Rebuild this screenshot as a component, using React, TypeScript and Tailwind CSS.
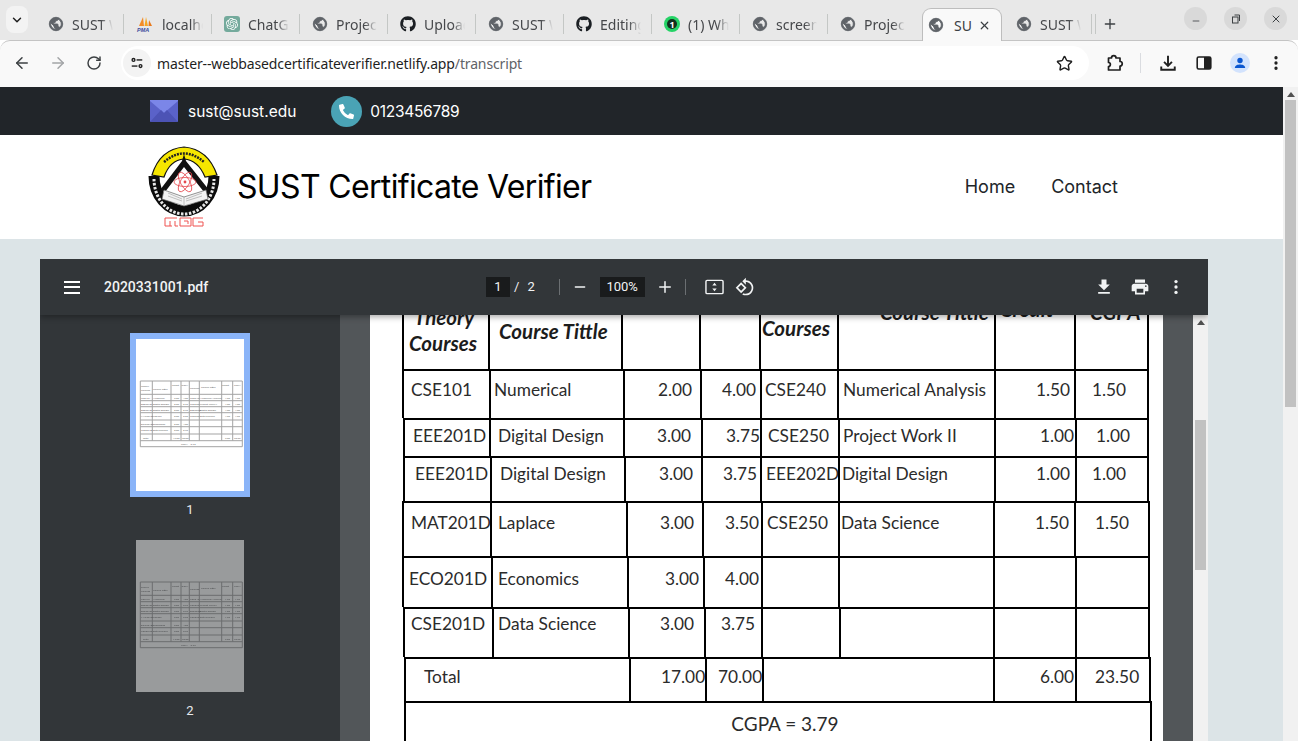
import { ArrowLeft, ArrowRight, ChevronDown, Minus, MoreVertical, Plus, RotateCw, Star, X } from "lucide-react"
import { FaGithub, FaPhoneAlt } from "react-icons/fa"
import { SiOpenai } from "react-icons/si"

function Globe() {
    return (
        <svg viewBox="0 0 24 24" className="h-4 w-4 shrink-0" fill="#5f6368" stroke="#5f6368" strokeWidth="1.4">
            <path d="M12 2C6.48 2 2 6.48 2 12s4.48 10 10 10 10-4.48 10-10S17.52 2 12 2zm-1 17.93c-3.95-.49-7-3.85-7-7.93 0-.62.08-1.21.21-1.79L9 15v1c0 1.1.9 2 2 2v1.93zm6.9-2.54c-.26-.81-1-1.39-1.9-1.39h-1v-3c0-.55-.45-1-1-1H8v-2h2c.55 0 1-.45 1-1V7h2c1.1 0 2-.9 2-2v-.41c2.93 1.19 5 4.06 5 7.41 0 2.08-.8 3.97-2.1 5.39z" />
        </svg>
    )
}

function PmaIcon() {
    return (
        <svg viewBox="0 0 18 16" className="h-4 w-[18px] shrink-0">
            <path d="M3 10 L7 1 L8 10 Z" fill="#f28c28" />
            <path d="M8.5 10 L10 1 L12 10 Z" fill="#f5a623" />
            <path d="M12.5 10 L13 4 L16 10 Z" fill="#e8791c" />
            <text x="1" y="15.5" fontSize="5.5" fontWeight="700" fontStyle="italic" fill="#3b4a9c" fontFamily="Liberation Sans, sans-serif">PMA</text>
        </svg>
    )
}

function GptIcon() {
    return (
        <div className="flex h-4 w-4 shrink-0 items-center justify-center rounded-[3px] bg-[#74aa9c] text-white">
            <SiOpenai className="h-3 w-3" />
        </div>
    )
}

function WhatsappIcon() {
    return (
        <div className="flex h-4 w-4 shrink-0 items-center justify-center rounded-full bg-[#25d366]">
            <div className="flex h-[10px] w-[10px] items-center justify-center rounded-full bg-[#12301f] text-[9px] leading-none font-bold text-white">1</div>
        </div>
    )
}

const tabs = [
    { label: "SUST Web", icon: <Globe /> },
    { label: "localhost", icon: <PmaIcon /> },
    { label: "ChatGPT", icon: <GptIcon /> },
    { label: "Project", icon: <Globe /> },
    { label: "Upload", icon: <FaGithub className="h-4 w-4 shrink-0 text-[#1b1f23]" /> },
    { label: "SUST Web", icon: <Globe /> },
    { label: "Editing", icon: <FaGithub className="h-4 w-4 shrink-0 text-[#1b1f23]" /> },
    { label: "(1) Whats", icon: <WhatsappIcon /> },
    { label: "screen", icon: <Globe /> },
    { label: "Project", icon: <Globe /> },
]

function Tab({ label, icon, last }: { label: string; icon: React.ReactNode; last?: boolean }) {
    return (
        <div className="flex h-8 w-[88px] shrink-0 items-center pl-3">
            {icon}
            <span className="ml-2 w-[41px] overflow-hidden text-[14px] whitespace-nowrap text-[#45474a] [mask-image:linear-gradient(to_right,black_70%,transparent)]">
                {label}
            </span>
            {!last && <span className="ml-auto h-5 w-px bg-[#c4c7c5]" />}
        </div>
    )
}

function TabStrip() {
    return (
        <div className="flex h-10 shrink-0 bg-[#e8e8e8] pt-2 font-['Noto_Sans',sans-serif]">
            <div className="mt-[-2px] ml-[6px] flex h-[27px] w-[22px] items-center justify-center rounded-lg bg-[#f3f3f3] text-[#1f1f1f]">
                <ChevronDown size={14} strokeWidth={2.5} />
            </div>
            <div className="ml-2 flex">
                {tabs.map((tab, i) => (
                    <Tab key={i} {...tab} last={i === 9} />
                ))}
                <div className="z-10 ml-[6px] flex h-[33px] w-[80px] shrink-0 items-center rounded-t-[9px] border border-b-0 border-[#bdbdbd] bg-[#f9f9f9] pl-[5px]">
                    <Globe />
                    <span className="ml-[10px] text-[14px] text-[#3c4043]">SU</span>
                    <X size={13} strokeWidth={2.2} className="mr-[10px] ml-auto text-[#3c4043]" />
                </div>
                <div className="ml-[2px] flex">
                    <Tab label="SUST Web" icon={<Globe />} />
                    <span className="mt-[6px] ml-[3px] h-5 w-px bg-[#c4c7c5]" />
                </div>
                <Plus size={16} strokeWidth={2} className="mt-2 ml-[6px] text-[#3c4043]" />
            </div>
            <div className="mt-[-1px] ml-auto flex gap-[17px] pr-[11px]">
                <div className="flex h-[23px] w-[23px] items-center justify-center rounded-full bg-[#d9d9d9] text-[#3c4043]">
                    <Minus size={10} strokeWidth={2} className="mt-1" />
                </div>
                <div className="flex h-[23px] w-[23px] items-center justify-center rounded-full bg-[#d9d9d9]">
                    <svg viewBox="0 0 10 10" className="h-[10px] w-[10px]" fill="none" stroke="#3c4043" strokeWidth="1">
                        <rect x="1.5" y="3" width="5.5" height="6" />
                        <path d="M3.5 1 H8.5 V7" />
                    </svg>
                </div>
                <div className="flex h-[23px] w-[23px] items-center justify-center rounded-full bg-[#d9d9d9] text-[#3c4043]">
                    <X size={12} strokeWidth={2} />
                </div>
            </div>
        </div>
    )
}

function AddressBar() {
    return (
        <div className="flex h-[47px] shrink-0 items-center rounded-t-[10px] border-t border-[#c4c4c4] bg-[#f9f9f9] pb-[2px] pl-[13px] font-['Noto_Sans',sans-serif] text-[#3c4043]">
            <ArrowLeft size={18} strokeWidth={2} />
            <ArrowRight size={18} strokeWidth={2} className="ml-[18px] text-[#a3a5a7]" />
            <RotateCw size={16} strokeWidth={2.2} className="ml-[19px]" />
            <div className="ml-[19px] flex h-[34px] w-[968px] items-center rounded-full bg-white">
                <div className="ml-[2px] flex h-7 w-7 items-center justify-center rounded-full bg-[#f3f3f3]">
                    <svg viewBox="0 0 16 16" className="h-[14px] w-[14px]" fill="none" stroke="#1f1f1f" strokeWidth="1.6">
                        <circle cx="4" cy="4.5" r="1.6" />
                        <path d="M7.5 4.5 H14" />
                        <circle cx="12" cy="11.5" r="1.6" />
                        <path d="M2 11.5 H8.5" />
                    </svg>
                </div>
                <span className="ml-[6px] text-[14px] tracking-[-0.14px] text-[#1f1f1f]">
                    master--webbasedcertificateverifier.netlify.app<span className="text-[#5f6368]">/transcript</span>
                </span>
                <Star size={17} strokeWidth={2} className="mr-[16px] ml-auto text-[#1f1f1f]" />
            </div>
            <svg viewBox="0 0 18 18" className="ml-[17px] h-[18px] w-[18px]" fill="none" stroke="#1f1f1f" strokeWidth="1.7" strokeLinejoin="round">
                <path d="M2.5 4 H5.5 C5.5 0.8 10 0.8 10 4 H14 V7.5 C17 7.5 17 12 14 12 V16 H2.5 V12.5 C5 12.5 5 8.5 2.5 8.5 Z" />
            </svg>
            <span className="ml-[16px] h-5 w-px bg-[#dadce0]" />
            <svg viewBox="0 0 16 16" className="ml-[18px] h-[18px] w-[18px]" fill="none" stroke="#1f1f1f" strokeWidth="1.7">
                <path d="M8 1.5 V10 M4.5 7 L8 10.5 L11.5 7 M2 11 V14 H14 V11" />
            </svg>
            <svg viewBox="0 0 16 16" className="ml-[19px] h-4 w-4">
                <rect x="1.2" y="2" width="13.6" height="12" rx="1.5" fill="none" stroke="#1f1f1f" strokeWidth="1.6" />
                <rect x="8" y="2" width="7" height="12" fill="#1f1f1f" />
            </svg>
            <div className="ml-[18px] flex h-5 w-5 items-center justify-center rounded-full bg-[#d3e3fd]">
                <svg viewBox="0 0 16 16" className="h-4 w-4" fill="#0b57d0">
                    <circle cx="8" cy="5.5" r="2.7" />
                    <path d="M2.8 13 C3 10 5.5 9.4 8 9.4 C10.5 9.4 13 10 13.2 13 Z" />
                </svg>
            </div>
            <MoreVertical size={18} strokeWidth={2.4} className="ml-[17px] text-[#1f1f1f]" />
        </div>
    )
}

function Logo() {
    return (
        <svg viewBox="0 0 72 82" className="h-[82px] w-[72px] shrink-0">
            <path d="M6 30 A30 35 0 0 0 66 30" fill="none" stroke="#0b0b0b" strokeWidth="11" />
            <path d="M6 33 A30 35 0 0 0 66 33" fill="none" stroke="#e8e8e8" strokeWidth="3" strokeDasharray="2.5 1.5" />
            <path d="M4 29 Q 12 3 36 1 Q 60 3 69 29 L 57 31 Q 50 14 36 13 Q 22 14 16 31 Z" fill="#f6e600" stroke="#111" strokeWidth="1.2" />
            <path d="M16 16 Q 36 -1 56 16" fill="none" stroke="#222" strokeWidth="2.5" strokeDasharray="2 1" />
            <path d="M36 8 L38 15 L61 44 L56 46 L36 21 L17 46 L12 44 L34 15 Z" fill="#111" />
            <g fill="none" stroke="#e5484d" strokeWidth="0.8">
                <ellipse cx="37" cy="36" rx="11" ry="4.5" />
                <ellipse cx="37" cy="36" rx="11" ry="4.5" transform="rotate(60 37 36)" />
                <ellipse cx="37" cy="36" rx="11" ry="4.5" transform="rotate(120 37 36)" />
            </g>
            <circle cx="37" cy="36" r="1.4" fill="#e5484d" />
            <path d="M16 44 L36 51 L58 44 L60 53 L36 60 L14 53 Z" fill="#f2f2f2" stroke="#666" strokeWidth="0.7" />
            <path d="M36 51 V60 M20 47 L34 53 M20 50 L34 55 M54 47 L38 53 M54 50 L38 55" stroke="#888" strokeWidth="0.5" fill="none" />
            <g fill="none" stroke="#ef5350" strokeWidth="1">
                <path d="M17 72 H29 M17 72 V80 M17 80 H24 M22 75 V80 M27 75 V80 H30" />
                <path d="M32 72 H43 V80 H32 Z M36 75 H40 V78" />
                <path d="M45 72 H55 M45 72 V80 H55 V76 H50" />
            </g>
        </svg>
    )
}

function TopBar() {
    return (
        <div className="flex h-[48px] shrink-0 items-center bg-[#212529] pl-[150px] font-['Inter',sans-serif] text-[15.5px] text-white">
            <svg viewBox="0 0 28 22" className="h-[22px] w-7">
                <rect width="28" height="22" rx="1" fill="#5a62c9" />
                <path d="M0 1 L14 13 L28 1 V0 H0 Z" fill="#7b86e8" />
                <path d="M0 22 L11 10 L14 13 L17 10 L28 22 Z" fill="#4c53b5" />
            </svg>
            <span className="ml-[10px] pt-[2px]">sust@sust.edu</span>
            <div className="ml-[35px] flex h-[31px] w-[31px] items-center justify-center rounded-full bg-[#4aa3b5] text-white">
                <FaPhoneAlt size={15} className="scale-x-[-1] rotate-90" />
            </div>
            <span className="ml-[8px] pt-[2px] tracking-[-0.3px]">0123456789</span>
        </div>
    )
}

function SiteHeader() {
    return (
        <div className="flex h-[104px] shrink-0 items-center bg-white pr-[165px] pl-[148px] font-['Inter',sans-serif] text-black">
            <Logo />
            <span className="ml-[17px] text-[32px] font-normal tracking-[-0.66px]">SUST Certificate Verifier</span>
            <nav className="ml-auto flex gap-9 pb-[2px] text-[18px] text-[#212529]">
                <a>Home</a>
                <a>Contact</a>
            </nav>
        </div>
    )
}

const thumbRows = [42, 55.3, 61.7, 67.7, 73.7, 81, 87.7, 95, 101.7, 107.7]
const thumbCols = [4.3, 16.3, 35, 45, 53.3, 63.3, 85.7, 96.7, 106.3]
const thumbText: [number, number, string][] = [
    [5, 48, "Theory"], [5, 52, "Courses"], [17, 51, "Course Tittle"], [36, 47, "Credit"], [45.5, 47, "CGPA"], [54, 50, "Courses"], [65, 49, "Course Tittle"], [86, 47, "Credit"], [98, 47, "CGPA"],
    [5, 59.5, "CSE101"], [17, 59.5, "Numerical"], [38, 59.5, "2.00"], [47, 59.5, "4.00"], [54, 59.5, "CSE240"], [64, 59.5, "Numerical Analysis"], [89, 59.5, "1.50"], [99, 59.5, "1.50"],
    [5, 65.5, "EEE201D"], [17, 65.5, "Digital Design"], [38, 65.5, "3.00"], [47, 65.5, "3.75"], [54, 65.5, "CSE250"], [64, 65.5, "Project Work II"], [89, 65.5, "1.00"], [99, 65.5, "1.00"],
    [5, 71.5, "EEE201D"], [17, 71.5, "Digital Design"], [38, 71.5, "3.00"], [47, 71.5, "3.75"], [54, 71.5, "EEE202D"], [64, 71.5, "Digital Design"], [89, 71.5, "1.00"], [99, 71.5, "1.00"],
    [5, 78, "MAT201D"], [17, 78, "Laplace"], [38, 78, "3.00"], [47, 78, "3.50"], [54, 78, "CSE250"], [64, 78, "Data Science"], [89, 78, "1.50"], [99, 78, "1.50"],
    [5, 85.5, "ECO201D"], [17, 85.5, "Economics"], [38, 85.5, "3.00"], [47, 85.5, "4.00"],
    [5, 92, "CSE201D"], [17, 92, "Data Science"], [38, 92, "3.00"], [47, 92, "3.75"],
    [7, 99.5, "Total"], [37, 99.5, "17.00"], [46, 99.5, "70.00"], [89, 99.5, "6.00"], [98, 99.5, "23.50"],
    [45, 106, "CGPA = 3.79"],
]

function ThumbPage() {
    return (
        <svg viewBox="0 0 108 152" className="block h-[152px] w-[108px] bg-white">
            <g stroke="#a3a3a3" strokeWidth="1">
                {thumbRows.map(y => <line key={y} x1="4.3" x2="106.3" y1={y} y2={y} />)}
                {thumbCols.map((x, i) => (
                    <line key={x} x1={x} x2={x} y1="42" y2={i === 0 || i === 8 ? 107.7 : 101.7} />
                ))}
            </g>
            <g fontSize="2.6" fill="#666" fontFamily="Lato, sans-serif">
                {thumbText.map(([x, y, text]) => <text key={`${x}-${y}`} x={x} y={y}>{text}</text>)}
            </g>
        </svg>
    )
}

function Sidebar() {
    return (
        <div className="flex w-[300px] shrink-0 flex-col items-center bg-[#323639] pt-[18px] font-['Roboto',sans-serif] text-[13px] text-[#e8eaed]">
            <div className="border-[6px] border-[#8ab4f8]">
                <ThumbPage />
            </div>
            <div className="h-[37px] leading-[26px]">1</div>
            <div className="border-[6px] border-transparent">
                <div className="opacity-50">
                    <ThumbPage />
                </div>
            </div>
            <div className="h-[37px] leading-[26px]">2</div>
        </div>
    )
}

const docRows = [
    {
        box: "ml-[33px] h-[54px] grid-cols-[86px_133px_78px_60px_78px_157px_80px_75px] text-[20.5px] font-bold italic text-[#1c1c1c]",
        cells: [
            { text: "Theory", sub: "Courses", cls: "-mt-[10px] pl-[9px]" },
            { text: "Course Tittle", cls: "pt-1 pl-2" },
            { text: "", cls: "" },
            { text: "", cls: "" },
            { text: "Courses", cls: "pt-px pl-0" },
            { text: "Course Tittle", cls: "-mt-[15px] pl-[40px]" },
            { text: "Credit", cls: "-mt-[18px] pl-[3px]" },
            { text: "CGPA", cls: "-mt-[15px] pl-[13px]" },
        ],
    },
    {
        box: "ml-[33px] h-[49px] border-t-2 grid-cols-[87px_134px_77px_60px_77px_157px_80px_75px]",
        pad: "pt-[7px]",
        cells: [
            { text: "CSE101", cls: "pl-[6px]" },
            { text: "Numerical", cls: "pl-[2px]" },
            { text: "2.00", cls: "pl-[32px]" },
            { text: "4.00", cls: "pl-[19px]" },
            { text: "CSE240", cls: "pl-[2px]" },
            { text: "Numerical Analysis", cls: "pl-[3px]" },
            { text: "1.50", cls: "pl-[39px]" },
            { text: "1.50", cls: "pl-[15px]" },
        ],
    },
    {
        box: "ml-[34px] h-[38px] border-t-2 grid-cols-[86px_134px_78px_59px_78px_156px_81px_74px]",
        pad: "pt-[4px]",
        cells: [
            { text: "EEE201D", cls: "pl-[7px]" },
            { text: "Digital Design", cls: "pl-[6px]" },
            { text: "3.00", cls: "pl-[31px]" },
            { text: "3.75", cls: "pl-[22px]" },
            { text: "CSE250", cls: "pl-[5px]" },
            { text: "Project Work II", cls: "pl-[2px]" },
            { text: "1.00", cls: "pl-[43px]" },
            { text: "1.00", cls: "pl-[18px]" },
        ],
    },
    {
        box: "ml-[34px] h-[45px] border-t-2 grid-cols-[87px_134px_77px_59px_78px_156px_81px_74px]",
        pad: "pt-[4px]",
        cells: [
            { text: "EEE201D", cls: "pl-[9px]" },
            { text: "Digital Design", cls: "pl-[7px]" },
            { text: "3.00", cls: "pl-[32px]" },
            { text: "3.75", cls: "pl-[19px]" },
            { text: "EEE202D", cls: "pl-[3px]" },
            { text: "Digital Design", cls: "pl-[1px]" },
            { text: "1.00", cls: "pl-[39px]" },
            { text: "1.00", cls: "pl-[14px]" },
        ],
    },
    {
        box: "ml-[33px] h-[55px] border-t-2 grid-cols-[88px_136px_76px_59px_77px_155px_81px_76px]",
        pad: "pt-[8px]",
        cells: [
            { text: "MAT201D", cls: "pl-[6px]" },
            { text: "Laplace", cls: "pl-[5px]" },
            { text: "3.00", cls: "pl-[31px]" },
            { text: "3.50", cls: "pl-[20px]" },
            { text: "CSE250", cls: "pl-[3px]" },
            { text: "Data Science", cls: "pl-0" },
            { text: "1.50", cls: "pl-[39px]" },
            { text: "1.50", cls: "pl-[18px]" },
        ],
    },
    {
        box: "ml-[33px] h-[51px] border-t-2 grid-cols-[89px_136px_76px_58px_77px_155px_82px_75px]",
        pad: "pt-[9px]",
        cells: [
            { text: "ECO201D", cls: "pl-[4px]" },
            { text: "Economics", cls: "pl-[4px]" },
            { text: "3.00", cls: "pl-[35px]" },
            { text: "4.00", cls: "pl-[19px]" },
            { text: "", cls: "" },
            { text: "", cls: "" },
            { text: "", cls: "" },
            { text: "", cls: "" },
        ],
    },
    {
        box: "ml-[34px] h-[50px] border-t-2 grid-cols-[89px_136px_76px_57px_78px_154px_82px_75px]",
        pad: "pt-[3px]",
        cells: [
            { text: "CSE201D", cls: "pl-[5px]" },
            { text: "Data Science", cls: "pl-[3px]" },
            { text: "3.00", cls: "pl-[29px]" },
            { text: "3.75", cls: "pl-[14px]" },
            { text: "", cls: "" },
            { text: "", cls: "" },
            { text: "", cls: "" },
            { text: "", cls: "" },
        ],
    },
    {
        box: "ml-[35px] h-[44px] border-t-2 grid-cols-[225px_76px_57px_231px_82px_76px]",
        pad: "pt-[6px]",
        cells: [
            { text: "Total", cls: "pl-[17px]" },
            { text: "17.00", cls: "pl-[29px]" },
            { text: "70.00", cls: "pl-[10px]" },
            { text: "", cls: "" },
            { text: "6.00", cls: "pl-[44px]" },
            { text: "23.50", cls: "pl-[17px]" },
        ],
    },
    {
        box: "ml-[35px] h-[60px] border-t-2 grid-cols-[748px]",
        pad: "pt-[9px]",
        cells: [{ text: "CGPA = 3.79", cls: "pl-[13px] text-center text-[19px]" }],
    },
]

function DocTable() {
    return (
        <div className="-ml-px font-['Lato',sans-serif] text-[17.3px] leading-6 text-[#2b2b2b]">
            {docRows.map(row => (
                <div key={row.box} className={`grid w-max border-black ${row.box}`}>
                    {row.cells.map((cell, i) => (
                        <div
                            key={i}
                            className={`border-l-2 border-black whitespace-nowrap last:border-r-2 ${row.pad ?? ""}`}
                        >
                            <div className={`ml-px ${cell.cls}`}>
                                {cell.text}
                                {cell.sub && <div className="-ml-[5px] mt-[2px]">{cell.sub}</div>}
                            </div>
                        </div>
                    ))}
                </div>
            ))}
        </div>
    )
}

function ViewerToolbar() {
    return (
        <div className="relative z-10 flex h-[56px] shrink-0 items-center bg-[#323639] font-['Roboto',sans-serif] text-[14px] text-[#f1f3f4] shadow-[0_2px_6px_rgba(0,0,0,0.35)]">
            <div className="flex w-[446px] items-center pl-6">
                <div className="flex w-4 flex-col gap-[3.5px]">
                    <span className="h-[2px] bg-white" />
                    <span className="h-[2px] bg-white" />
                    <span className="h-[2px] bg-white" />
                </div>
                <span className="ml-6 font-medium">2020331001.pdf</span>
            </div>
            <div className="flex h-5 w-6 items-center justify-center bg-[#191b1c] text-[13px]">1</div>
            <span className="ml-[4px] text-[13px]">/</span>
            <span className="ml-[8px] text-[13px]">2</span>
            <span className="ml-[24px] h-4 w-px bg-[#6b6f72]" />
            <Minus size={16} strokeWidth={2} className="ml-[12px]" />
            <div className="ml-[12px] flex h-5 w-[45px] items-center justify-center bg-[#191b1c] text-[13px]">100%</div>
            <Plus size={18} strokeWidth={2} className="ml-[11px]" />
            <span className="ml-[11px] h-4 w-px bg-[#6b6f72]" />
            <svg viewBox="0 0 20 16" className="ml-[19px] h-[16px] w-[19px]" fill="none" stroke="#f1f3f4" strokeWidth="1.5">
                <rect x="1" y="1" width="18" height="14" rx="1.2" />
                <path d="M10 3.5 L12.3 6.5 H7.7 Z M10 12.5 L12.3 9.5 H7.7 Z" fill="#f1f3f4" stroke="none" />
            </svg>
            <svg viewBox="0 0 24 24" className="ml-[11px] h-[20px] w-[20px]" fill="#f1f3f4">
                <path d="M7.34 6.41L.86 12.9l6.49 6.48 6.49-6.48-6.5-6.49zM3.69 12.9l3.66-3.66L11 12.9l-3.66 3.66-3.65-3.66zm15.67-6.26C17.61 4.88 15.3 4 13 4V.76L8.76 5 13 9.24V6c1.79 0 3.58.68 4.95 2.05 2.73 2.73 2.73 7.17 0 9.9C16.58 19.32 14.79 20 13 20c-.97 0-1.94-.21-2.84-.61l-1.49 1.49C10.02 21.62 11.51 22 13 22c2.3 0 4.61-.88 6.36-2.64 3.52-3.51 3.52-9.21 0-12.72z" />
            </svg>
            <div className="ml-auto flex items-center gap-4 pr-[22px]">
                <svg viewBox="0 0 24 24" className="h-5 w-5" fill="#f1f3f4">
                    <path d="M19 9h-4V3H9v6H5l7 7 7-7zM5 18v2h14v-2H5z" />
                </svg>
                <svg viewBox="0 0 24 24" className="h-5 w-5" fill="#f1f3f4">
                    <path d="M19 8H5c-1.66 0-3 1.34-3 3v6h4v4h12v-4h4v-6c0-1.66-1.34-3-3-3zm-3 11H8v-5h8v5zm3-7c-.55 0-1-.45-1-1s.45-1 1-1 1 .45 1 1-.45 1-1 1zm-1-9H6v4h12V3z" />
                </svg>
                <svg viewBox="0 0 24 24" className="h-5 w-5" fill="#f1f3f4">
                    <circle cx="12" cy="5.5" r="2" />
                    <circle cx="12" cy="12" r="2" />
                    <circle cx="12" cy="18.5" r="2" />
                </svg>
            </div>
        </div>
    )
}

function PdfViewer() {
    return (
        <div className="flex h-full w-[1168px] flex-col overflow-hidden">
            <ViewerToolbar />
            <div className="flex min-h-0 flex-1">
                <Sidebar />
                <div className="flex min-w-0 flex-1 overflow-hidden bg-[#525659]">
                    <div className="ml-[30px] h-full w-[793px] overflow-hidden bg-white">
                        <DocTable />
                    </div>
                    <div className="ml-auto flex w-[15px] flex-col items-center bg-[#f1f1f1]">
                        <div className="mt-[5px] h-0 w-0 border-x-[4px] border-b-[5px] border-x-transparent border-b-[#505050]" />
                        <div className="mt-[95px] h-[150px] w-[11px] bg-[#c1c1c1]" />
                    </div>
                </div>
            </div>
        </div>
    )
}

export default function App() {
    return (
        <div className="flex h-[741px] flex-col overflow-hidden">
            <TabStrip />
            <AddressBar />
            <div className="flex min-h-0 flex-1">
                <div className="flex min-w-0 flex-1 flex-col">
                    <TopBar />
                    <SiteHeader />
                    <div className="min-h-0 flex-1 bg-[#dce4e7] pt-5 pl-10">
                        <PdfViewer />
                    </div>
                </div>
                <div className="flex w-[15px] shrink-0 flex-col items-center bg-[#f1f1f1]">
                    <div className="mt-[5px] h-0 w-0 border-x-[4px] border-b-[5px] border-x-transparent border-b-[#505050]" />
                    <div className="mt-[3px] h-[307px] w-[11px] bg-[#c1c1c1]" />
                </div>
            </div>
        </div>
    )
}
